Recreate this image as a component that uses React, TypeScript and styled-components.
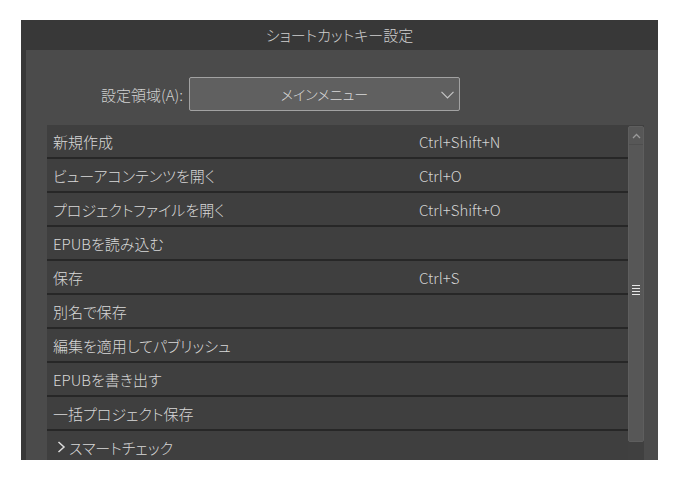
import { createGlobalStyle, styled } from 'styled-components';

const GlobalStyle = createGlobalStyle`
  html, body {
    margin: 0;
    padding: 0;
    background: #ffffff;
  }
  body {
    font-family: "Noto Sans CJK JP", "Noto Sans", sans-serif;
    font-weight: 300;
  }
`;

const Page = styled.div`
  padding: 20px 0 0 21px;
`;

const Dialog = styled.div`
  width: 637px;
  height: 440px;
  display: flex;
  flex-direction: column;
  overflow: hidden;
  background: #383838;
`;

const TitleBar = styled.div`
  height: 30px;
  line-height: 30px;
  text-align: center;
  color: #cfcfcf;
  font-size: 15px;
  font-feature-settings: 'palt';
`;

const Body = styled.div`
  flex: 1;
  min-height: 0;
  margin-left: 5px;
  background: #4b4b4b;
  display: flex;
  flex-direction: column;
  padding: 0 14px 0 21px;
`;

const AreaRow = styled.div`
  display: flex;
  align-items: center;
  padding: 27px 0 14px;
`;

const AreaLabel = styled.label`
  width: 90px;
  margin-left: 46px;
  margin-right: 6px;
  text-align: right;
  color: #d2d2d2;
  font-size: 15px;
  white-space: nowrap;
`;

const Select = styled.div`
  position: relative;
  width: 271px;
  height: 34px;
  box-sizing: border-box;
  border: 1px solid #a2a2a2;
  border-radius: 2px;
  background: #606060;
  display: flex;
  align-items: center;
  justify-content: center;
  color: #d8d8d8;
  font-size: 14px;
  font-feature-settings: 'palt';
`;

const Chevron = styled.svg`
  position: absolute;
  right: 5px;
  top: 13px;
`;

const ListArea = styled.div`
  flex: 1;
  min-height: 0;
  display: flex;
  overflow: hidden;
`;

const List = styled.ul`
  flex: 1;
  margin: 0;
  padding: 0;
  list-style: none;
`;

const Row = styled.li`
  height: 34px;
  box-sizing: border-box;
  display: grid;
  grid-template-columns: 366px 1fr;
  align-items: center;
  padding-left: 6px;
  background: #3f3f3f;
  border-bottom: 2px solid #272727;
  color: #d8d8d8;
  font-size: 15px;
  font-feature-settings: 'palt';
  white-space: nowrap;
`;

const Name = styled.span<{ $indent?: boolean }>`
  padding-left: ${(p) => (p.$indent ? '4px' : '0')};
  display: flex;
  align-items: center;
  gap: 3px;
`;

const Keys = styled.span`
  font-size: 15px;
  color: #d4d4d4;
`;

const ScrollBar = styled.div`
  width: 16px;
  display: flex;
  flex-direction: column;
  background: #404040;
`;

const ScrollThumb = styled.div`
  height: 316px;
  margin-top: 1px;
  box-sizing: border-box;
  background: #575757;
  border: 1px solid #5e5e5e;
  border-radius: 2px;
  display: flex;
  flex-direction: column;
  align-items: center;
`;

const ArrowCap = styled.div`
  height: 17px;
  width: 100%;
  border-bottom: 1px solid #4e4e4e;
  display: flex;
  align-items: center;
  justify-content: center;
`;

const Grip = styled.div`
  margin-top: 140px;
  width: 8px;
  display: flex;
  flex-direction: column;
  gap: 2px;
`;

const GripLine = styled.div`
  height: 1px;
  background: #e6e6e6;
`;

type Item = { name: string; keys?: string; group?: boolean };

const items: Item[] = [
  { name: '新規作成', keys: 'Ctrl+Shift+N' },
  { name: 'ビューアコンテンツを開く', keys: 'Ctrl+O' },
  { name: 'プロジェクトファイルを開く', keys: 'Ctrl+Shift+O' },
  { name: 'EPUBを読み込む' },
  { name: '保存', keys: 'Ctrl+S' },
  { name: '別名で保存' },
  { name: '編集を適用してパブリッシュ' },
  { name: 'EPUBを書き出す' },
  { name: '一括プロジェクト保存' },
  { name: 'スマートチェック', group: true },
];

export default function App() {
  return (
    <Page>
      <GlobalStyle />
      <Dialog>
        <TitleBar>ショートカットキー設定</TitleBar>
        <Body>
          <AreaRow>
            <AreaLabel>設定領域(A):</AreaLabel>
            <Select>
              メインメニュー
              <Chevron width="13" height="8" viewBox="0 0 13 8">
                <path d="M0.5 0.8 L6.5 6.8 L12.5 0.8" fill="none" stroke="#c4c4c4" strokeWidth="1.2" />
              </Chevron>
            </Select>
          </AreaRow>
          <ListArea>
            <List>
              {items.map((it) => (
                <Row key={it.name}>
                  <Name $indent={it.group}>
                    {it.group && (
                      <svg width="9" height="12" viewBox="0 0 9 12">
                        <path d="M1.5 1 L7 6 L1.5 11" fill="none" stroke="#dcdcdc" strokeWidth="1.5" />
                      </svg>
                    )}
                    {it.name}
                  </Name>
                  <Keys>{it.keys}</Keys>
                </Row>
              ))}
            </List>
            <ScrollBar>
              <ScrollThumb>
                <ArrowCap>
                  <svg width="9" height="6" viewBox="0 0 9 6">
                    <path d="M1 5 L4.5 1.5 L8 5" fill="none" stroke="#9a9a9a" strokeWidth="1.3" />
                  </svg>
                </ArrowCap>
                <Grip>
                  <GripLine />
                  <GripLine />
                  <GripLine />
                  <GripLine />
                </Grip>
              </ScrollThumb>
            </ScrollBar>
          </ListArea>
        </Body>
      </Dialog>
    </Page>
  );
}
